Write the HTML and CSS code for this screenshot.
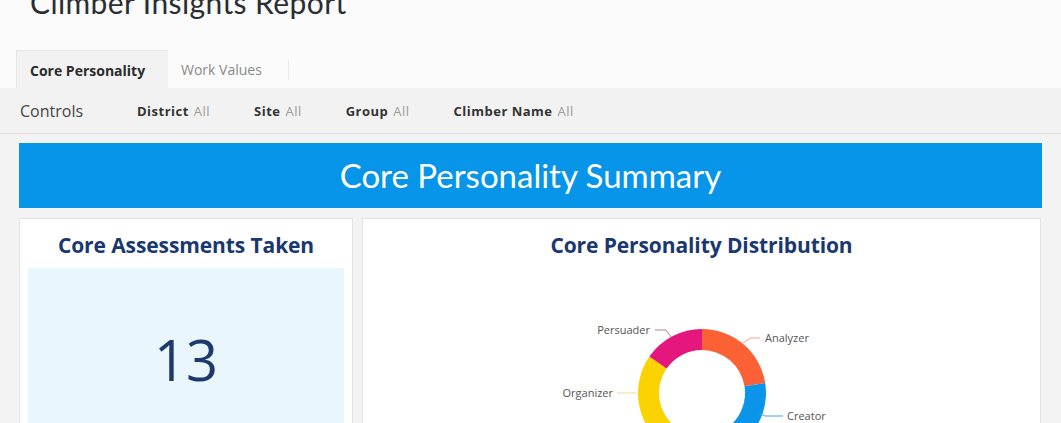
FILE: index.html
```html
<!DOCTYPE html>
<html>
<head>
<meta charset="utf-8">
<link rel="stylesheet" href="styles.css">
</head>
<body>
<header class="top">
  <h1 class="report-title">Climber Insights Report</h1>
</header>
<nav class="tabs">
  <div class="tab active">Core Personality</div>
  <div class="tab">Work Values</div>
  <div class="tab-sep"></div>
</nav>
<div class="controls">
  <span class="controls-label">Controls</span>
  <span class="ctrl"><b>District</b> All</span>
  <span class="ctrl"><b>Site</b> All</span>
  <span class="ctrl"><b>Group</b> All</span>
  <span class="ctrl"><b>Climber Name</b> All</span>
</div>
<main class="sheet">
  <div class="banner">Core Personality Summary</div>
  <div class="row">
    <section class="card card-kpi">
      <h2 class="card-title">Core Assessments Taken</h2>
      <div class="kpi-box"><span class="kpi-value">13</span></div>
    </section>
    <section class="card card-chart">
      <h2 class="card-title">Core Personality Distribution</h2>
      <div class="chart">
        <svg class="donut" width="677" height="160" viewBox="0 0 677 160">
          <g transform="translate(339,125)">
            <path d="M0,-64 A64,64 0 0 1 63.2,-10.0 L42.5,-6.7 A43,43 0 0 0 0,-43 Z" fill="#fc6035"/>
            <path d="M63.2,-10.0 A64,64 0 0 1 -14.2,62.4 L-9.6,41.9 A43,43 0 0 0 42.5,-6.7 Z" fill="#0b95ea"/>
            <path d="M-14.2,62.4 A64,64 0 0 1 -40.6,49.5 L-27.3,33.2 A43,43 0 0 0 -9.6,41.9 Z" fill="#5ec26a"/>
            <path d="M-40.6,49.5 A64,64 0 0 1 -52.6,-36.4 L-35.4,-24.5 A43,43 0 0 0 -27.3,33.2 Z" fill="#fad300"/>
            <path d="M-52.6,-36.4 A64,64 0 0 1 0,-64 L0,-43 A43,43 0 0 0 -35.4,-24.5 Z" fill="#e5177d"/>
            <g fill="none" stroke-width="1">
              <polyline points="-47,-63 -36,-63 -31,-56" stroke="#c9789c"/>
              <polyline points="41,-50 48,-55 58,-55" stroke="#f6a486"/>
              <polyline points="-85,0 -66,0" stroke="#f7d98a"/>
              <polyline points="57,20 63,23 81,23" stroke="#3aa6ef"/>
            </g>
            <g class="lbl">
              <text x="-52" y="-59" text-anchor="end">Persuader</text>
              <text x="63" y="-51">Analyzer</text>
              <text x="-89" y="4" text-anchor="end">Organizer</text>
              <text x="85" y="27">Creator</text>
            </g>
          </g>
        </svg>
      </div>
    </section>
  </div>
</main>
</body>
</html>
```
FILE: styles.css
```css
* { box-sizing: border-box; }
html, body { margin: 0; padding: 0; }
body {
  background: #fbfbfb;
  font-family: "Open Sans", "Liberation Sans", sans-serif;
  width: 1061px;
  height: 423px;
  overflow: hidden;
}
.top {
  height: 50px;
  overflow: hidden;
}
.report-title {
  margin: -15px 0 0 30px;
  font-family: Lato, "Liberation Sans", sans-serif;
  font-weight: 400;
  font-size: 30px;
  line-height: 34px;
  color: #2a2e33;
  letter-spacing: 0.4px;
}
.tabs {
  display: flex;
  align-items: stretch;
  height: 38px;
  padding-left: 16px;
}
.tab {
  display: flex;
  align-items: center;
  padding: 1px 13px 0 13px;
  font-family: "Open Sans", sans-serif;
  font-size: 14px;
  color: #8a8a8a;
  font-weight: 400;
}
.tab.active {
  width: 152px;
  background: #f2f2f2;
  border-top: 1px solid #e6e6e6;
  border-left: 1px solid #e6e6e6;
  color: #2b2b2b;
  font-weight: 700;
}
.tab-sep {
  width: 1px;
  background: #e8e8e8;
  margin: 10px 0 8px 13px;
}
.controls {
  display: flex;
  align-items: center;
  height: 46px;
  background: #f2f2f2;
  border-bottom: 1px solid #e2e2e2;
  padding-left: 20px;
  font-family: "Open Sans", sans-serif;
  font-size: 13px;
  letter-spacing: 0.5px;
  color: #9a9a9a;
}
.controls-label {
  font-size: 16px;
  letter-spacing: 0;
  color: #444;
  width: 117px;
}
.ctrl { margin-right: 44px; }
.ctrl b {
  color: #333;
  font-weight: 700;
  margin-right: 1px;
}
.sheet {
  background: #f3f3f3;
  padding: 9px 19px 0 19px;
  height: 290px;
}
.banner {
  height: 65px;
  background: #0795ea;
  color: #fff;
  display: flex;
  align-items: center;
  justify-content: center;
  font-family: Lato, "Open Sans", sans-serif;
  font-size: 33px;
  font-weight: 400;
  padding-bottom: 2px;
}
.row {
  display: flex;
  gap: 9px;
  margin-top: 10px;
}
.card {
  background: #fff;
  border: 1px solid #e4e4e4;
  height: 220px;
}
.card-kpi { width: 334px; padding: 0 8px; }
.card-chart { width: 679px; }
.card-title {
  margin: 0;
  padding-top: 12px;
  height: 49px;
  text-align: center;
  font-family: "Open Sans", sans-serif;
  font-weight: 700;
  font-size: 21px;
  color: #1a3870;
  letter-spacing: -0.1px;
}
.kpi-box {
  background: #e9f7fc;
  height: 170px;
  display: flex;
  justify-content: center;
  padding-top: 53px;
}
.kpi-value {
  font-family: "Open Sans", sans-serif;
  font-size: 56px;
  line-height: 76px;
  color: #1d3a6a;
  font-weight: 400;
}
.chart { position: relative; }
.donut { display: block; }
.lbl text {
  font-family: "Open Sans", sans-serif;
  font-size: 11px;
  fill: #555;
}
```
